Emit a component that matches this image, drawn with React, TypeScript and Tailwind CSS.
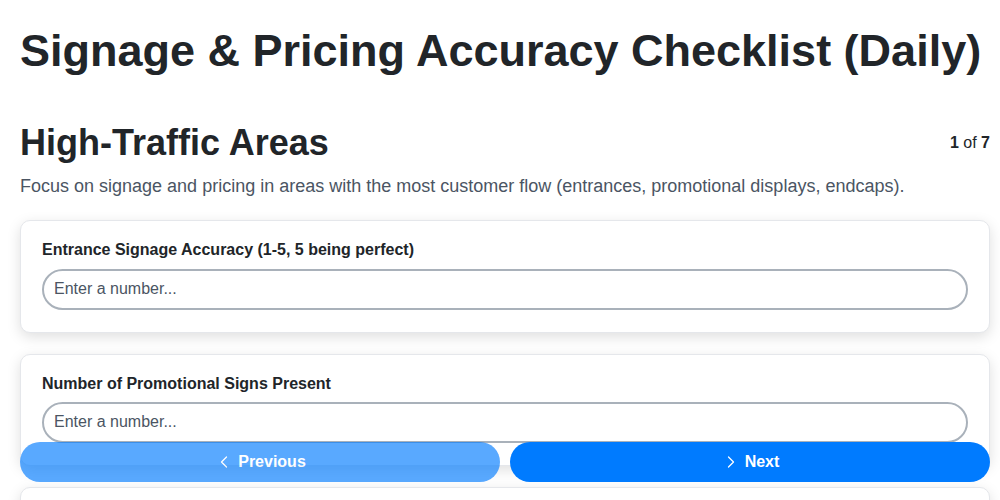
import { ChevronLeft, ChevronRight } from 'lucide-react'

interface Question {
  id: string
  label: string
  placeholder: string
}

const questions: Question[] = [
  { id: 'entrance', label: 'Entrance Signage Accuracy (1-5, 5 being perfect)', placeholder: 'Enter a number...' },
  { id: 'promo', label: 'Number of Promotional Signs Present', placeholder: 'Enter a number...' },
  { id: 'endcap', label: 'Endcap Pricing Accuracy (1-5, 5 being perfect)', placeholder: 'Enter a number...' },
  { id: 'missing', label: 'Number of Missing or Incorrect Price Tags', placeholder: 'Enter a number...' },
]

const QuestionCard = ({ question }: { question: Question }) => {
  return (
    <div className="rounded-[10px] border border-[#e5e7eb] bg-white px-[21px] pb-[22px] pt-5 shadow-[0_4px_14px_rgba(0,0,0,0.13)]">
      <label htmlFor={question.id} className="mb-[9px] block text-[16px] font-bold leading-[1.15] text-[#212529]">
        {question.label}
      </label>
      <input
        id={question.id}
        type="number"
        placeholder={question.placeholder}
        className="block h-[41px] w-full rounded-full border-2 border-[#a9b1ba] bg-white px-[10px] text-[16px] text-[#212529] outline-none placeholder:text-[#4b5563]"
      />
    </div>
  )
}

export default function App() {
  return (
    <div className="min-h-screen bg-white pb-24 pl-5 pr-[10px] pt-6 font-['Liberation_Sans',Arial,sans-serif] text-[#212529]">
      <h1 className="text-[45px] font-bold leading-[1.2]">Signage &amp; Pricing Accuracy Checklist (Daily)</h1>

      <div className="mt-[43px] flex items-center justify-between">
        <h2 className="text-[36px] font-bold leading-[1.2]">High-Traffic Areas</h2>
        <div className="text-[16px]">
          <span className="font-bold">1</span> of <span className="font-bold">7</span>
        </div>
      </div>
      <p className="mt-[9px] text-[18px] leading-[1.5] text-[#4b5563]">
        Focus on signage and pricing in areas with the most customer flow (entrances, promotional displays, endcaps).
      </p>

      <div className="mt-5 flex flex-col gap-[21px]">
        {questions.map((q) => (
          <QuestionCard key={q.id} question={q} />
        ))}
      </div>

      <div className="fixed bottom-[18px] left-5 right-[10px] flex gap-[10px]">
        <button
          disabled
          className="flex h-10 flex-1 items-center justify-center gap-1 rounded-full bg-[#007bff] text-[16px] font-bold text-white opacity-65"
        >
          <ChevronLeft size={20} strokeWidth={1.5} />
          Previous
        </button>
        <button className="flex h-10 flex-1 items-center justify-center gap-1 rounded-full bg-[#007bff] text-[16px] font-bold text-white">
          <ChevronRight size={20} strokeWidth={1.5} />
          Next
        </button>
      </div>
    </div>
  )
}
